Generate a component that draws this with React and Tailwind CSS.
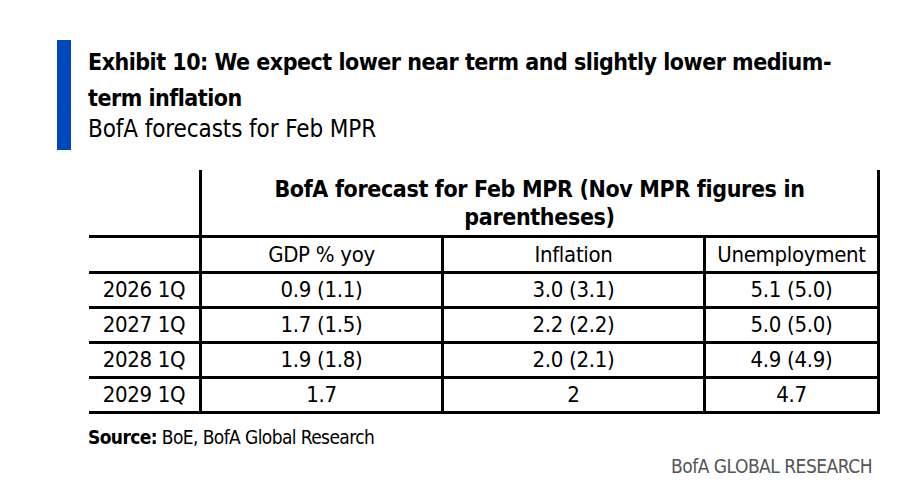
const rows = [
  ["2026 1Q", "0.9 (1.1)", "3.0 (3.1)", "5.1 (5.0)"],
  ["2027 1Q", "1.7 (1.5)", "2.2 (2.2)", "5.0 (5.0)"],
  ["2028 1Q", "1.9 (1.8)", "2.0 (2.1)", "4.9 (4.9)"],
  ["2029 1Q", "1.7", "2", "4.7"],
];

const Row = ({ cells, height }) => (
  <div className={`flex border-b-[3px] border-black ${height}`}>
    <div className="w-[113px] border-r-[3px] border-black flex items-center justify-center">
      {cells[0]}
    </div>
    <div className="w-[242px] border-r-[3px] border-black flex items-center justify-center">
      {cells[1]}
    </div>
    <div className="w-[262px] border-r-[3px] border-black flex items-center justify-center">
      {cells[2]}
    </div>
    <div className="flex-1 border-r-[3px] border-black flex items-center justify-center">
      {cells[3]}
    </div>
  </div>
);

export default function App() {
  return (
    <div className="w-[910px] h-[498px] bg-white text-black pl-[57px] pt-[40px] font-['Liberation_Sans_Narrow','DejaVu_Sans_Condensed',sans-serif]">
      {/* heading */}
      <div className="flex">
        <div className="w-[14px] h-[110px] bg-[#0047bb]" />
        <div className="pl-[17px] pt-[4px]">
          <h1 className="text-[23px] leading-[36px] font-bold tracking-[-0.5px]">
            Exhibit 10: We expect lower near term and slightly lower medium-
            <br />
            term inflation
          </h1>
          <p className="text-[24px] leading-[26px] tracking-[-0.1px]">BofA forecasts for Feb MPR</p>
        </div>
      </div>

      {/* table */}
      <div className="mt-[20px] ml-[32px] w-[791px] text-[22px] leading-[26px] tracking-[-0.3px]">
        <div className="flex h-[68px] border-b-[3px] border-black">
          <div className="w-[113px] border-r-[3px] border-black" />
          <div className="flex-1 border-r-[3px] border-black flex items-center justify-center text-center font-bold text-[23px] leading-[28px] tracking-[-0.35px]">
            <span>
              BofA forecast for Feb MPR (Nov MPR figures in
              <br />
              parentheses)
            </span>
          </div>
        </div>
        <Row cells={["", "GDP % yoy", "Inflation", "Unemployment"]} height="h-[36px]" />
        {rows.map((r) => (
          <Row key={r[0]} cells={r} height="h-[35px]" />
        ))}
      </div>

      {/* footer */}
      <p className="mt-[11px] ml-[31px] text-[19px] leading-[24px] tracking-[-0.6px]">
        <span className="font-bold">Source:</span> BoE, BofA Global Research
      </p>
      <p className="mt-[5px] pr-[38px] text-right text-[19px] leading-[24px] tracking-[-0.5px] text-[#555]">
        BofA GLOBAL RESEARCH
      </p>
    </div>
  );
}
